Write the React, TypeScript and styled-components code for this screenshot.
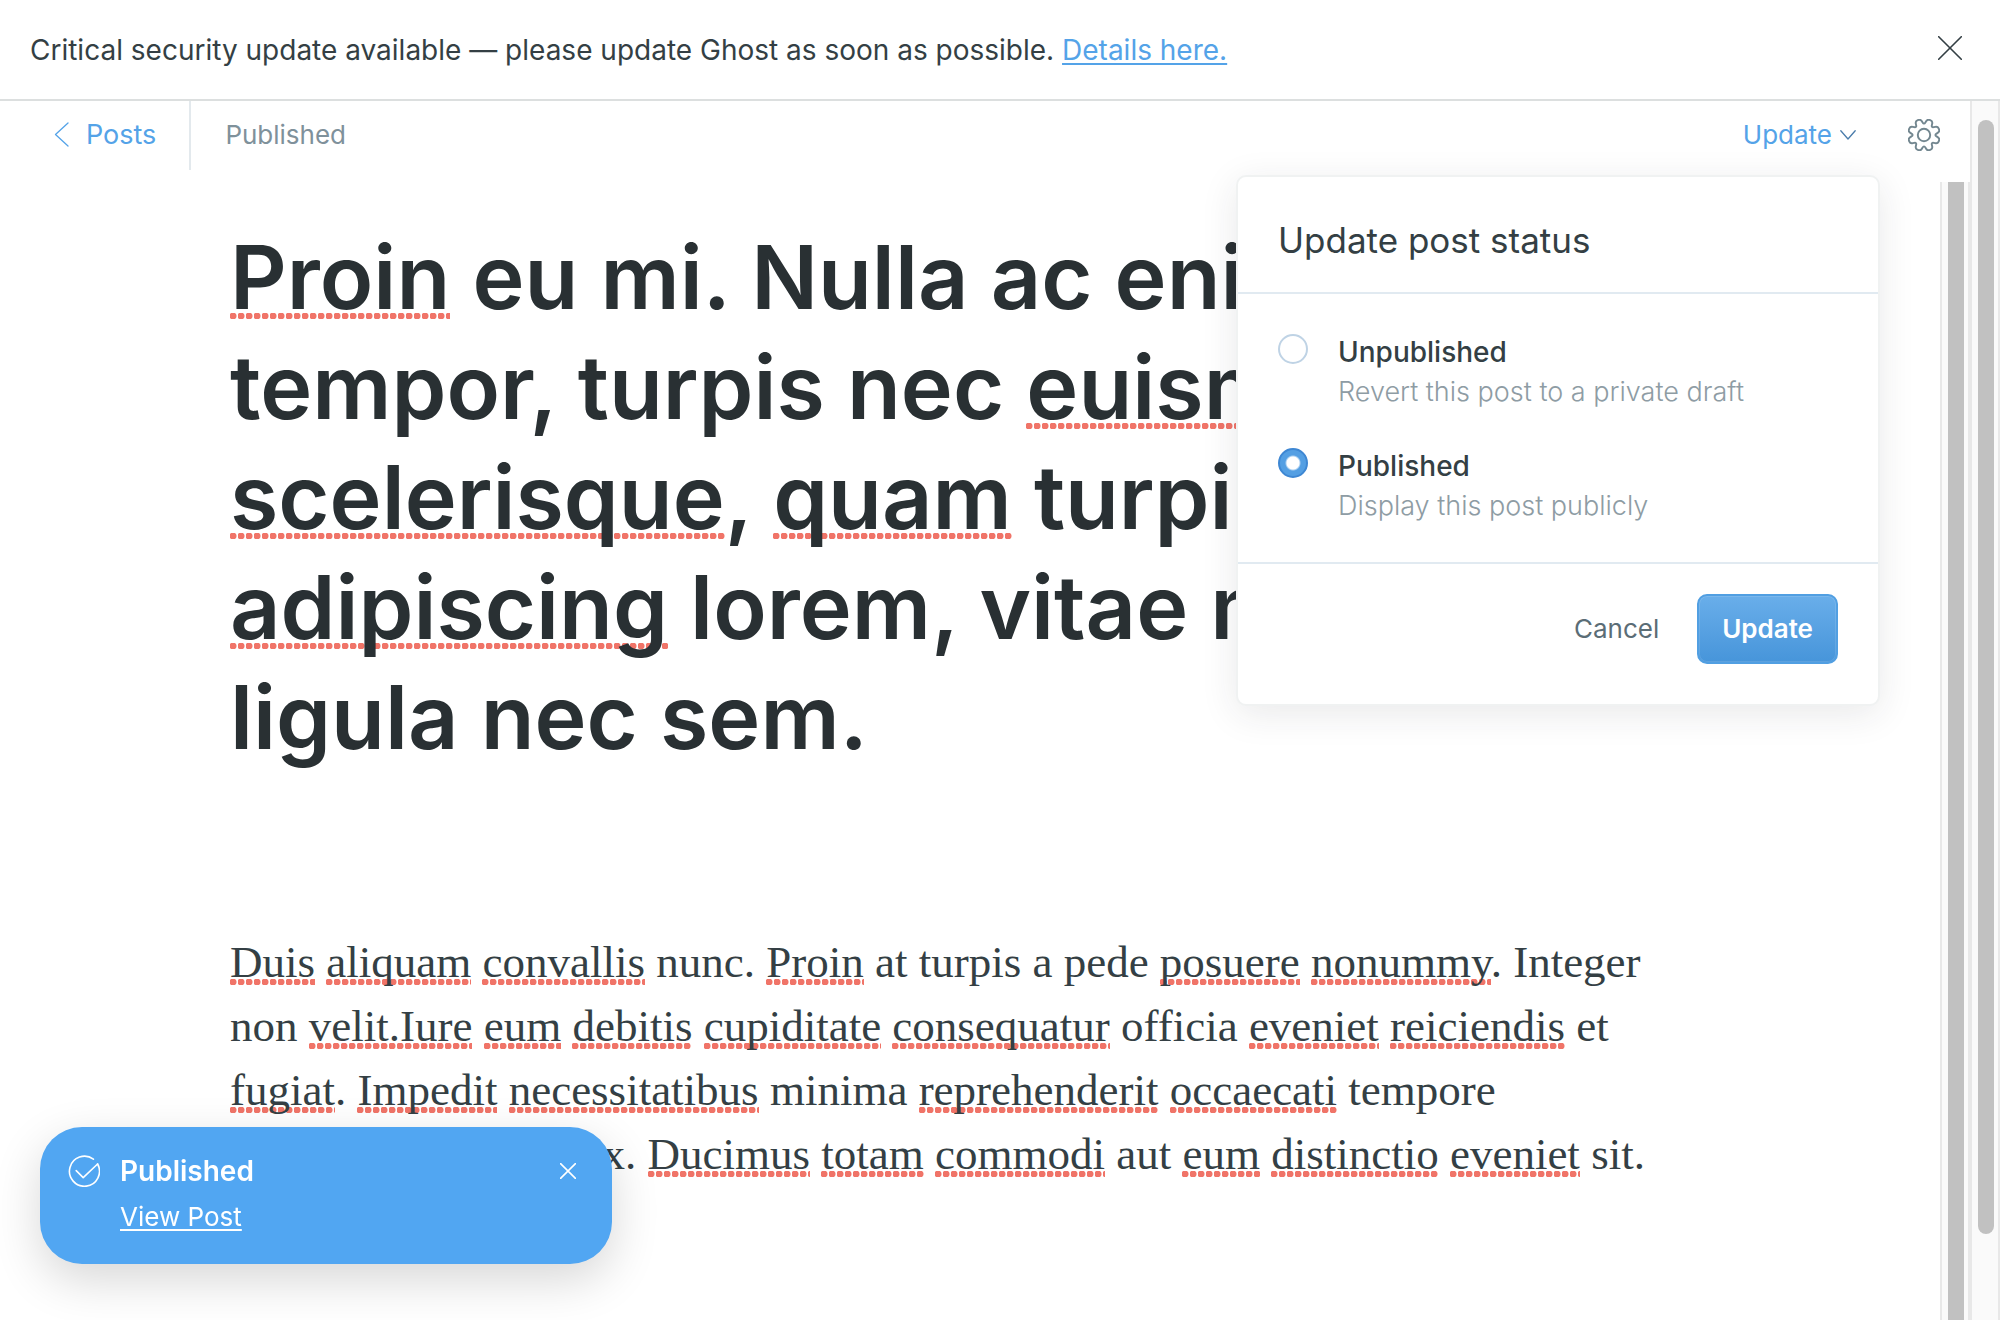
import React, { useState } from "react";
import styled, { createGlobalStyle } from "styled-components";

const sans = `Inter, "Liberation Sans", sans-serif`;
const serif = `Georgia, "Liberation Serif", serif`;

const GlobalStyle = createGlobalStyle`
  *, *::before, *::after { box-sizing: border-box; }
  body {
    margin: 0;
    background: #fff;
    color: #343f44;
    font-family: ${sans};
    font-size: 26px;
    line-height: 32px;
  }
  button { border: 0; padding: 0; background: none; font: inherit; color: inherit; cursor: pointer; }
  svg { display: block; flex: none; }
`;

const Page = styled.div`
  display: flex;
  flex-direction: column;
  height: 100vh;
  overflow: hidden;
`;

const Banner = styled.aside`
  display: flex;
  flex: none;
  align-items: flex-start;
  justify-content: space-between;
  padding: 32px 38px 31px 30px;
  border-bottom: 2px solid #dcdfdf;
  font-size: 28px;
  line-height: 36px;
`;

const BannerText = styled.p`
  margin: 0;
`;

const BannerLink = styled.a`
  color: #54a3e8;
  text-decoration: underline;
  text-decoration-thickness: 2px;
  text-underline-offset: 3px;
`;

const IconButton = styled.button`
  display: flex;
  color: ${(p) => p.color};
`;

const BannerClose = styled(IconButton)`
  padding-top: 4px;
`;

const Workspace = styled.div`
  display: flex;
  flex: 1;
  min-height: 0;
`;

const Editor = styled.main`
  display: flex;
  flex: 1;
  flex-direction: column;
  min-width: 0;
`;

const Toolbar = styled.header`
  display: flex;
  flex: none;
  align-items: flex-start;
  justify-content: space-between;
  height: 81px;
  padding-right: 30px;
`;

const ToolbarGroup = styled.div<{ $gap: number }>`
  display: flex;
  align-items: center;
  gap: ${(p) => p.$gap}px;
  height: 67px;
`;

const BackLink = styled.a`
  display: flex;
  align-items: center;
  align-self: flex-start;
  gap: 17px;
  height: 69px;
  padding: 0 33px 2px 54px;
  border-right: 2px solid #e3e9ed;
  color: #54a3e8;
  font-size: 27px;
  text-decoration: none;
`;

const Status = styled.span`
  color: #7f919b;
`;

const Menu = styled.div`
  position: relative;
`;

const MenuTrigger = styled.button`
  display: flex;
  align-items: center;
  gap: 8px;
  color: #54a3e8;
`;

const Popover = styled.form`
  position: absolute;
  z-index: 2;
  top: 56px;
  right: -24px;
  width: 644px;
  border: 2px solid #f0f2f2;
  border-radius: 10px;
  background: #fff;
  background-clip: padding-box;
  box-shadow: 0 8px 36px rgba(39, 44, 46, 0.1);
`;

const PopoverTitle = styled.h2`
  margin: 0;
  padding: 41px 40px 30px;
  border-bottom: 2px solid #e1eaf1;
  font-size: 35px;
  font-weight: 400;
  line-height: 44px;
`;

const Options = styled.fieldset`
  display: flex;
  flex-direction: column;
  gap: 34px;
  margin: 0;
  padding: 38px 40px 36px;
  border: 0;
  border-bottom: 2px solid #e1eaf1;
`;

const Option = styled.label`
  display: flex;
  gap: 30px;
`;

const Radio = styled.input`
  flex: none;
  appearance: none;
  width: 30px;
  height: 30px;
  margin: 2px 0 0;
  border: 2px solid #bfd3e5;
  border-radius: 50%;
  background: #fff;

  &:checked {
    border-color: #3e87d3;
    background: radial-gradient(circle, #fff 6px, #549fe3 8px);
  }
`;

const OptionText = styled.span`
  display: flex;
  flex-direction: column;
`;

const OptionName = styled.span`
  font-size: 28px;
  font-weight: 500;
  line-height: 40px;
`;

const OptionHint = styled.span`
  color: #8e9ca4;
  font-size: 27px;
  font-weight: 300;
  line-height: 40px;
`;

const Actions = styled.div`
  display: flex;
  align-items: center;
  justify-content: flex-end;
  gap: 38px;
  padding: 30px 40px 40px;
`;

const CancelButton = styled.button`
  color: #5b6d76;
`;

const PrimaryButton = styled.button`
  height: 70px;
  padding: 0 23px;
  border: 2px solid #519fe2;
  border-radius: 10px;
  background: linear-gradient(#69aeea, #4795da);
  box-shadow: inset 0 0 0 1px rgba(255, 255, 255, 0.12);
  color: #fff;
  font-weight: 600;
`;

const EditorBody = styled.div`
  display: flex;
  flex: 1;
  min-height: 0;
`;

const Canvas = styled.div`
  flex: 1;
  min-width: 0;
  overflow: hidden;
`;

const Article = styled.article`
  max-width: 1480px;
  margin: 0 auto;
  padding-top: 40px;
`;

const Headline = styled.h1`
  margin: 0 0 158px;
  color: #293033;
  font-size: 88px;
  font-weight: 600;
  line-height: 110px;
  white-space: nowrap;
`;

const Paragraph = styled.p`
  margin: 0;
  color: #343f44;
  font-family: ${serif};
  font-size: 45px;
  line-height: 64px;
  white-space: nowrap;
`;

const Misspelt = styled.span`
  background: radial-gradient(circle at 3px 3px, #f07468 3px, rgba(240, 116, 104, 0) 4px) repeat-x;
  background-size: 8px 6px;
  background-position: left bottom 2px;

  ${Headline} & {
    background-position: left bottom 11px;
  }
`;

const Scrollbar = styled.div`
  flex: none;
  width: 30px;
  padding: 0 4px 0 6px;
  border: solid #e8e8e8;
  border-width: 0 2px;
  background: #fafafa;
`;

const Thumb = styled.div<{ $inset?: boolean }>`
  width: 16px;
  height: ${(p) => (p.$inset ? "calc(100% - 105px)" : "100%")};
  margin-top: ${(p) => (p.$inset ? 19 : 0)}px;
  border-radius: ${(p) => (p.$inset ? 8 : 0)}px;
  background: #c1c1c1;
`;

const Toast = styled.section`
  position: fixed;
  z-index: 3;
  bottom: 56px;
  left: 40px;
  display: flex;
  align-items: flex-start;
  gap: 20px;
  width: 572px;
  padding: 28px 36px 31px 28px;
  border-radius: 42px;
  background: #51a6f2;
  box-shadow: 0 16px 48px rgba(0, 0, 0, 0.16);
  color: #fff;
`;

const ToastBody = styled.div`
  display: flex;
  flex: 1;
  flex-direction: column;
  align-items: flex-start;
  gap: 14px;
`;

const ToastTitle = styled.strong`
  font-size: 28px;
  font-weight: 600;
`;

const ToastLink = styled.a`
  color: inherit;
  text-decoration: underline;
  text-decoration-thickness: 2px;
  text-underline-offset: 3px;
`;

const ToastClose = styled(IconButton)`
  margin-top: 8px;
`;

const CloseIcon = ({ size, stroke }: { size: number; stroke: number }) => (
  <svg width={size} height={size} viewBox="0 0 24 24" fill="none" stroke="currentColor" strokeWidth={stroke} strokeLinecap="round">
    <path d="M.7.7l22.6 22.6M23.3.7L.7 23.3" />
  </svg>
);

const BackIcon = () => (
  <svg width="15" height="25" viewBox="0 0 15 25" fill="none" stroke="currentColor" strokeWidth="1.3" strokeLinecap="round" strokeLinejoin="round">
    <path d="M14 1L1.5 12.5 14 24" />
  </svg>
);

const DownIcon = () => (
  <svg width="16" height="10" viewBox="0 0 16 10" fill="none" stroke="#4a7cab" strokeWidth="1.3" strokeLinecap="round" strokeLinejoin="round">
    <path d="M.8.8L8 9 15.2.8" />
  </svg>
);

const CheckIcon = () => (
  <svg width="32" height="32" viewBox="0 0 32 32" fill="none" stroke="currentColor" strokeWidth="1.6" strokeLinecap="round" strokeLinejoin="round">
    <path d="M29.6 9L15.2 22.6 8.2 15.6" />
    <path d="M29.6 9A15 15 0 1 1 25.4 4.2" />
  </svg>
);

const polar = (radius: number, degrees: number) => {
  const a = (degrees * Math.PI) / 180;
  return [16 + radius * Math.cos(a), 16 + radius * Math.sin(a)];
};

const gearPath = () => {
  const corners: number[][] = [];
  for (let i = 0; i < 8; i++) {
    const c = 22.5 + i * 45;
    corners.push(polar(16.8, c - 10), polar(16.8, c + 10), polar(10.6, c + 22.5));
  }
  const towards = (a: number[], b: number[], t: number) =>
    [a[0] + (b[0] - a[0]) * t, a[1] + (b[1] - a[1]) * t].map((n) => n.toFixed(2)).join(" ");
  return (
    corners
      .map((p, i) => {
        const prev = corners[(i + 23) % 24];
        const next = corners[(i + 1) % 24];
        return `${i ? "L" : "M"}${towards(p, prev, 0.4)}Q${p[0].toFixed(2)} ${p[1].toFixed(2)} ${towards(p, next, 0.4)}`;
      })
      .join("") + "Z"
  );
};

const GearIcon = () => (
  <svg width="32" height="32" viewBox="-0.5 -0.5 33 33" fill="none" stroke="currentColor" strokeWidth="2" strokeLinejoin="round">
    <path d={gearPath()} />
    <circle cx="16" cy="16" r="6.4" />
  </svg>
);

const M = Misspelt;

export default function App() {
  const [status, setStatus] = useState("published");
  const options = [
    { value: "unpublished", name: "Unpublished", hint: "Revert this post to a private draft" },
    { value: "published", name: "Published", hint: "Display this post publicly" },
  ];

  return (
    <Page>
      <GlobalStyle />
      <Banner>
        <BannerText>
          Critical security update available — please update Ghost as soon as possible.{" "}
          <BannerLink href="#details">Details here.</BannerLink>
        </BannerText>
        <BannerClose color="#343f44" aria-label="Dismiss">
          <CloseIcon size={24} stroke={1.6} />
        </BannerClose>
      </Banner>

      <Workspace>
        <Editor>
          <Toolbar>
            <ToolbarGroup $gap={34}>
              <BackLink href="#posts">
                <BackIcon />
                Posts
              </BackLink>
              <Status>Published</Status>
            </ToolbarGroup>
            <ToolbarGroup $gap={52}>
              <Menu>
                <MenuTrigger aria-expanded="true">
                  Update
                  <DownIcon />
                </MenuTrigger>
                <Popover onSubmit={(e) => e.preventDefault()}>
                  <PopoverTitle>Update post status</PopoverTitle>
                  <Options aria-label="Post status">
                    {options.map((o) => (
                      <Option key={o.value}>
                        <Radio
                          type="radio"
                          name="status"
                          value={o.value}
                          checked={status === o.value}
                          onChange={() => setStatus(o.value)}
                        />
                        <OptionText>
                          <OptionName>{o.name}</OptionName>
                          <OptionHint>{o.hint}</OptionHint>
                        </OptionText>
                      </Option>
                    ))}
                  </Options>
                  <Actions>
                    <CancelButton type="button">Cancel</CancelButton>
                    <PrimaryButton type="submit">Update</PrimaryButton>
                  </Actions>
                </Popover>
              </Menu>
              <IconButton color="#738790" aria-label="Settings">
                <GearIcon />
              </IconButton>
            </ToolbarGroup>
          </Toolbar>

          <EditorBody>
            <Canvas>
              <Article>
                <Headline>
                  <M>Proin</M> eu mi. Nulla ac enim. In
                  <br />
                  tempor, turpis nec <M>euismod</M>
                  <br />
                  <M>scelerisque</M>, <M>quam</M> turpis
                  <br />
                  <M>adipiscing</M> lorem, vitae mattis
                  <br />
                  ligula nec sem.
                </Headline>
                <Paragraph>
                  <M>Duis</M> <M>aliquam</M> <M>convallis</M> nunc. <M>Proin</M> at turpis a pede <M>posuere</M>{" "}
                  <M>nonummy</M>. Integer
                  <br />
                  non <M>velit.Iure</M> <M>eum</M> <M>debitis</M> <M>cupiditate</M> <M>consequatur</M> officia{" "}
                  <M>eveniet</M> <M>reiciendis</M> et
                  <br />
                  <M>fugiat</M>. <M>Impedit</M> <M>necessitatibus</M> minima <M>reprehenderit</M> <M>occaecati</M>{" "}
                  tempore
                  <br />
                  <M>dignissimos</M> <M>harum</M> ex. <M>Ducimus</M> <M>totam</M> <M>commodi</M> aut <M>eum</M>{" "}
                  <M>distinctio</M> <M>eveniet</M> sit.
                </Paragraph>
              </Article>
            </Canvas>
            <Scrollbar aria-hidden="true">
              <Thumb />
            </Scrollbar>
          </EditorBody>
        </Editor>
        <Scrollbar aria-hidden="true">
          <Thumb $inset />
        </Scrollbar>
      </Workspace>

      <Toast role="status">
        <CheckIcon />
        <ToastBody>
          <ToastTitle>Published</ToastTitle>
          <ToastLink href="#post">View Post</ToastLink>
        </ToastBody>
        <ToastClose color="#fff" aria-label="Close notification">
          <CloseIcon size={16} stroke={2.4} />
        </ToastClose>
      </Toast>
    </Page>
  );
}
